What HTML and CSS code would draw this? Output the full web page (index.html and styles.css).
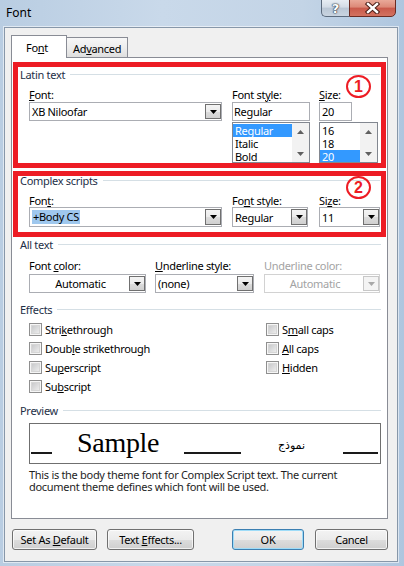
FILE: index.html
```html
<!DOCTYPE html>
<html lang="en">
<head>
<meta charset="utf-8">
<title>Font</title>
<link rel="stylesheet" href="styles.css">
</head>
<body>
<div class="window">
  <div class="titlebar">
    <div class="title">Font</div>
    <div class="caption">
      <div class="cbtn help">?</div>
      <div class="cbtn close">
        <svg width="15" height="12" viewBox="0 0 15 12"><path d="M3 2 L12 10 M12 2 L3 10" stroke="#4a1d16" stroke-width="4.4" stroke-linecap="square"/><path d="M3 2 L12 10 M12 2 L3 10" stroke="#fff" stroke-width="2.4" stroke-linecap="square"/></svg>
      </div>
    </div>
  </div>
  <div class="client">
    <div class="tabs">
      <div class="tab active">Fo<u>n</u>t</div>
      <div class="tab inactive">Ad<u>v</u>anced</div>
    </div>
    <div class="panel">
      <div class="redbox box1">
        <div class="ghead"><span>Latin text</span><i></i></div>
        <div class="fields">
          <div class="field w193">
            <div class="lbl"><u>F</u>ont:</div>
            <div class="combo h19"><span class="val">XB Niloofar</span><span class="dd"><svg width="7" height="4" viewBox="0 0 7 4"><path d="M0 0h7L3.5 4z" fill="#000"/></svg></span></div>
          </div>
          <div class="field w78 ml10">
            <div class="lbl">Font st<u>y</u>le:</div>
            <div class="edit">Regular</div>
            <div class="list">
              <div class="items"><div class="it sel">Regular</div><div class="it">Italic</div><div class="it">Bold</div></div>
              <div class="sb"><span class="arr"><svg width="7" height="4" viewBox="0 0 7 4"><path d="M0 4h7L3.5 0z" fill="#606060"/></svg></span><span class="arr"><svg width="7" height="4" viewBox="0 0 7 4"><path d="M0 0h7L3.5 4z" fill="#606060"/></svg></span></div>
            </div>
          </div>
          <div class="field w59 ml9">
            <div class="lbl"><u>S</u>ize:</div>
            <div class="edit w33">20</div>
            <div class="list">
              <div class="items"><div class="it">16</div><div class="it">18</div><div class="it sel">20</div></div>
              <div class="sb"><span class="arr"><svg width="7" height="4" viewBox="0 0 7 4"><path d="M0 4h7L3.5 0z" fill="#606060"/></svg></span><span class="arr"><svg width="7" height="4" viewBox="0 0 7 4"><path d="M0 0h7L3.5 4z" fill="#606060"/></svg></span></div>
            </div>
          </div>
        </div>
        <div class="mark m1">1</div>
      </div>

      <div class="redbox box2">
        <div class="ghead"><span>Complex scripts</span><i></i></div>
        <div class="fields">
          <div class="field w193">
            <div class="lbl">Fon<u>t</u>:</div>
            <div class="combo h20"><span class="val"><span class="hl">+Body CS</span></span><span class="dd"><svg width="7" height="4" viewBox="0 0 7 4"><path d="M0 0h7L3.5 4z" fill="#000"/></svg></span></div>
          </div>
          <div class="field w76 ml10">
            <div class="lbl">Fo<u>n</u>t style:</div>
            <div class="combo h20"><span class="val">Regular</span><span class="dd"><svg width="7" height="4" viewBox="0 0 7 4"><path d="M0 0h7L3.5 4z" fill="#000"/></svg></span></div>
          </div>
          <div class="field w61 ml11">
            <div class="lbl">Si<u>z</u>e:</div>
            <div class="combo h20"><span class="val">11</span><span class="dd"><svg width="7" height="4" viewBox="0 0 7 4"><path d="M0 0h7L3.5 4z" fill="#000"/></svg></span></div>
          </div>
        </div>
        <div class="mark m2">2</div>
      </div>

      <div class="sect alltext">
        <div class="ghead"><span>All text</span><i></i></div>
        <div class="fields">
          <div class="field w117">
            <div class="lbl">Font <u>c</u>olor:</div>
            <div class="combo h19"><span class="val center">Automatic</span><span class="dd"><svg width="7" height="4" viewBox="0 0 7 4"><path d="M0 0h7L3.5 4z" fill="#000"/></svg></span></div>
          </div>
          <div class="field w99 ml9">
            <div class="lbl"><u>U</u>nderline style:</div>
            <div class="combo h19"><span class="val">(none)</span><span class="dd"><svg width="7" height="4" viewBox="0 0 7 4"><path d="M0 0h7L3.5 4z" fill="#000"/></svg></span></div>
          </div>
          <div class="field w116 ml10 disabled">
            <div class="lbl">Underline color:</div>
            <div class="combo h19"><span class="val center">Automatic</span><span class="dd"><svg width="7" height="4" viewBox="0 0 7 4"><path d="M0 0h7L3.5 4z" fill="#a8a8a8"/></svg></span></div>
          </div>
        </div>
      </div>

      <div class="sect effects">
        <div class="ghead"><span>Effects</span><i></i></div>
        <div class="checks">
          <div class="chk"><span class="cb"></span><span>Stri<u>k</u>ethrough</span></div>
          <div class="chk"><span class="cb"></span><span>S<u>m</u>all caps</span></div>
          <div class="chk"><span class="cb"></span><span>Doub<u>l</u>e strikethrough</span></div>
          <div class="chk"><span class="cb"></span><span><u>A</u>ll caps</span></div>
          <div class="chk"><span class="cb"></span><span>Su<u>p</u>erscript</span></div>
          <div class="chk"><span class="cb"></span><span><u>H</u>idden</span></div>
          <div class="chk"><span class="cb"></span><span>Su<u>b</u>script</span></div>
        </div>
      </div>

      <div class="sect preview">
        <div class="ghead"><span>Preview</span><i></i></div>
        <div class="pvbox">
          <span class="seg s1"></span>
          <span class="sample">Sample</span>
          <span class="seg s2"></span>
          <span class="arabic" dir="rtl" lang="ar">نموذج</span>
          <span class="seg s3"></span>
        </div>
        <div class="desc">This is the body theme font for Complex Script text. The current<br>document theme defines which font will be used.</div>
      </div>
    </div>

    <div class="btnrow">
      <div class="btn b1"><span>Set As <u>D</u>efault</span></div>
      <div class="btn b2"><span>Text <u>E</u>ffects...</span></div>
      <div class="btn ok"><span>OK</span></div>
      <div class="btn cancel"><span>Cancel</span></div>
    </div>
  </div>
</div>
</body>
</html>
```

FILE: styles.css
```css
* { box-sizing: border-box; }
html, body { margin: 0; padding: 0; }
body {
  width: 404px;
  height: 566px;
  overflow: hidden;
  font-family: "Noto Sans", "Open Sans", sans-serif;
  font-size: 11px;
  letter-spacing: -0.3px;
  color: #000;
  background: linear-gradient(90deg, #b9cde2 0%, #c9d9ea 40%, #c3d4e6 75%, #aec6df 100%);
}
u { text-decoration: underline; text-underline-offset: 1px; }

.window { width: 404px; height: 566px; display: flex; flex-direction: column; }

/* title bar */
.titlebar { height: 27px; display: flex; flex-shrink: 0; }
.title { padding-left: 6px; line-height: 25px; font-size: 12px; letter-spacing: 0; color: #000; }
.caption { margin-left: auto; margin-right: 8px; display: flex; height: 18px; margin-top: -1px; }
.cbtn { height: 18px; display: flex; align-items: center; justify-content: center; }
.help {
  width: 28px;
  border: 1px solid #5c6b7d;
  border-right: none;
  border-radius: 0 0 0 5px;
  background: linear-gradient(#e7edf3, #d3dce6 45%, #bac7d5 50%, #c9d4e0);
  color: #fff;
  font-family: "DejaVu Sans", sans-serif;
  font-weight: bold;
  font-size: 13px;
  letter-spacing: 0;
  text-shadow: 0 0 1px #2a3442, 0 0 1px #2a3442, 0 0 2px #2a3442;
}
.close {
  width: 47px;
  border: 1px solid #6b2b22;
  border-radius: 0 0 5px 0;
  background: linear-gradient(#e9a999, #dc8877 45%, #c9594a 50%, #d37260);
}

/* client */
.client {
  margin-left: 4px;
  width: 394px;
  height: 535px;
  border: 1px solid #8797a9;
  box-shadow: 0 0 0 1px rgba(255,255,255,0.55);
  background: #f0f0f0;
  padding: 7px 9px 0 6px;
}

.tabs { display: flex; align-items: flex-end; height: 23px; margin-bottom: -1px; position: relative; z-index: 1; }
.tab { border: 1px solid #898c95; white-space: nowrap; line-height: 13px; }
.tab.active { width: 56px; height: 23px; background: #fff; border-bottom: none; padding: 5px 0 0 14px; }
.tab.inactive {
  width: 61px; height: 21px; border-left: none; padding: 4px 0 0 6px;
  background: linear-gradient(#f7f7f7, #ececec 55%, #dedede);
}

.panel {
  width: 377px;
  height: 462px;
  border: 1px solid #898c95;
  background: #fff;
  padding: 4px 0 0 1px;
}

/* annotation boxes */
.redbox { position: relative; width: 373px; border: 5px solid #ed1c24; }
.box1 { height: 106px; }
.box2 { height: 66px; margin-top: 3px; }

.ghead { display: flex; align-items: center; height: 13px; line-height: 13px; color: #1e2f47; }
.ghead span { white-space: nowrap; }
.ghead i { flex: 1; height: 1px; background: #d5dfe5; margin-left: 5px; }
.box1 .ghead { margin-top: 1px; padding-left: 2px; margin-right: 1px; }
.box2 .ghead { margin-top: -2px; padding-left: 2px; margin-right: 1px; }

.fields { display: flex; margin-top: 7px; padding-left: 11px; }
.field { display: flex; flex-direction: column; }
.lbl { height: 13px; line-height: 13px; white-space: nowrap; }
.box1 .lbl { margin-bottom: 1px; }
.w193 { width: 193px; } .w78 { width: 78px; } .w59 { width: 59px; }
.w76 { width: 76px; } .w61 { width: 61px; }
.w117 { width: 117px; } .w99 { width: 99px; } .w116 { width: 116px; }
.ml9 { margin-left: 9px; } .ml10 { margin-left: 10px; } .ml11 { margin-left: 11px; }

.edit {
  height: 19px; border: 1px solid #abadb3; background: #fff;
  padding-left: 1px; line-height: 17px; white-space: nowrap;
}
.w33 { width: 33px; padding-left: 2px; }

.combo {
  display: flex; border: 1px solid #abadb3; background: #fff;
  padding: 1px 0 1px 1px;
}
.h19 { height: 19px; }
.h20 { height: 20px; }
.val { flex: 1; display: flex; align-items: center; padding-left: 1px; white-space: nowrap; overflow: hidden; }
.val.center { justify-content: center; }
.hl { background: #9fc8ee; line-height: 14px; padding: 0 1px; }
.dd {
  width: 16px; border: 1px solid #707070;
  background: linear-gradient(#f4f4f4, #ebebeb 50%, #dcdcdc 51%, #d0d0d0);
  display: flex; align-items: center; justify-content: center;
}
.disabled .lbl { color: #a3a3a3; }
.disabled .combo { border-color: #d2d2d2; }
.disabled .val { color: #a3a3a3; }
.disabled .dd { border-color: #c8c8c8; background: #f4f4f4; }

.list {
  margin-top: 1px; height: 41px; border: 1px solid #828790; background: #fff;
  display: flex; overflow: hidden;
}
.items { flex: 1; padding-top: 1px; }
.it { height: 13px; line-height: 13px; padding-left: 2px; white-space: nowrap; }
.it.sel { background: #3399ff; color: #fff; }
.sb {
  width: 17px; display: flex; flex-direction: column; justify-content: space-between;
  background: #f2f2f2;
}
.arr { height: 17px; display: flex; align-items: center; justify-content: center; }

.mark {
  position: absolute;
  width: 25px; height: 23px;
  border: 2px solid #ed1c24;
  border-radius: 50%;
  color: #ed1c24;
  font-family: "Liberation Sans", sans-serif;
  font-weight: bold;
  font-size: 16px;
  letter-spacing: 0;
  display: flex; align-items: center; justify-content: center;
  background: transparent;
}
.m1 { left: 328px; top: 8px; }
.m2 { left: 328px; top: 0; }

/* plain sections */
.sect .ghead { padding-left: 7px; margin-right: 6px; }
.sect .fields { padding-left: 16px; margin-top: 8px; }
.sect .lbl { margin-bottom: 2px; }
.alltext { margin-top: 1px; }
.effects { margin-top: 10px; }
.preview { margin-top: 8px; }

.checks {
  display: grid; grid-template-columns: 237px auto; grid-auto-rows: 19px;
  padding-left: 16px; margin-top: 4px;
}
.chk { display: flex; align-items: center; white-space: nowrap; }
.cb {
  width: 13px; height: 13px; margin-right: 3px; flex-shrink: 0;
  border: 1px solid #8f8f8f; background: #f6f6f6; padding: 2px;
}
.cb::before {
  content: ""; display: block; width: 7px; height: 7px;
  background: linear-gradient(135deg, #c9cacc, #ececec);
  outline: 1px solid #d6d6d6;
}

.pvbox {
  margin: 6px 0 0 16px; width: 352px; height: 41px;
  border: 1px solid #6f6f6f; display: flex; align-items: flex-end; padding-left: 1px;
}
.seg { height: 2px; background: #1a1a1a; margin-bottom: 9px; flex-shrink: 0; }
.s1 { width: 21px; }
.s2 { width: 57px; margin-left: 25px; }
.s3 { width: 35px; margin-left: 37px; }
.sample {
  width: 82px; margin-left: 25px; margin-bottom: 6px;
  font-family: "Liberation Serif", serif; font-size: 28px; line-height: 28px;
  letter-spacing: -0.3px; white-space: nowrap;
}
.arabic {
  width: 29px; margin-left: 36px; margin-bottom: 10px;
  font-family: "DejaVu Sans", sans-serif; font-size: 11px; line-height: 14px; letter-spacing: 0;
  text-align: center; white-space: nowrap;
}
.desc { margin-top: 5px; padding-left: 16px; line-height: 12px; color: #1e1e1e; white-space: nowrap; }

/* bottom buttons */
.btnrow { display: flex; margin-top: 10px; }
.btn {
  height: 21px; border: 1px solid #707070; border-radius: 3px;
  background: linear-gradient(#f3f3f3, #ebebeb 50%, #dddddd 51%, #cfcfcf);
  display: flex; align-items: center; justify-content: center; white-space: nowrap;
  box-shadow: inset 0 0 0 1px rgba(255,255,255,0.7);
}
.b1 { width: 85px; margin-left: 1px; }
.b2 { width: 87px; margin-left: 10px; }
.ok { width: 72px; margin-left: 38px; border-color: #3c7fb1; box-shadow: inset 0 0 0 1px #9edcf8; }
.cancel { width: 73px; margin-left: 11px; }
```
